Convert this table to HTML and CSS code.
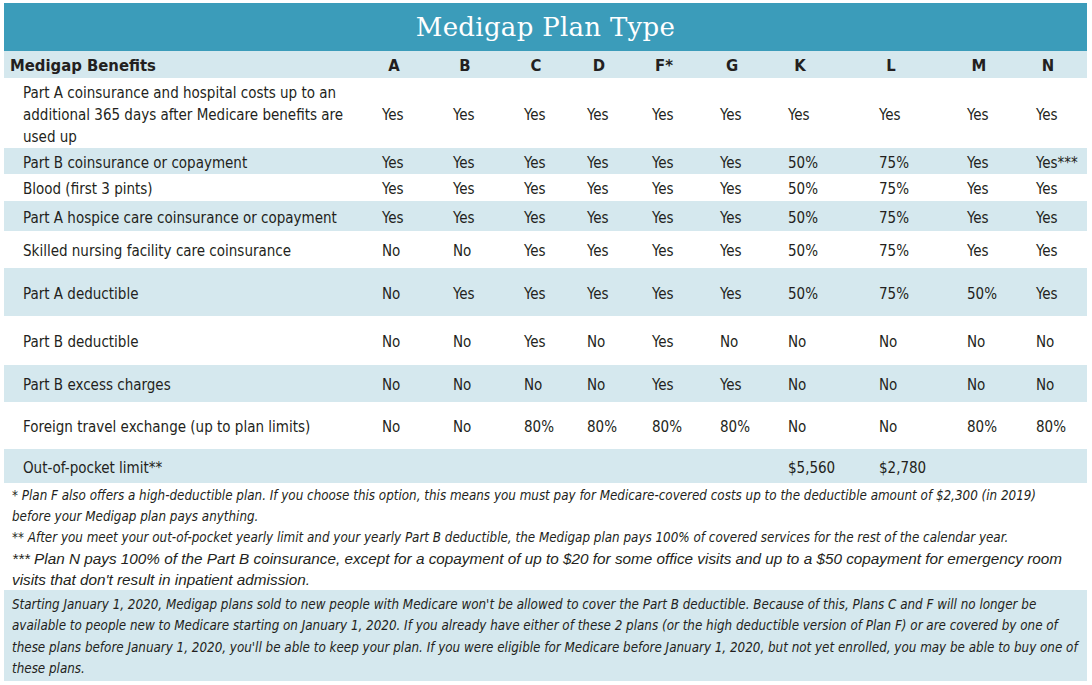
FILE: index.html
```html
<!DOCTYPE html>
<html lang="en">
<head>
<meta charset="utf-8">
<title>Medigap Plan Type</title>
<link rel="stylesheet" href="styles.css">
</head>
<body>
<div class="sheet">
  <div class="title">Medigap Plan Type</div>
  <div class="grid">
    <div class="row head">
      <div class="label">Medigap Benefits</div>
      <div class="c"><span class="hl">A</span></div>
      <div class="c"><span class="hl">B</span></div>
      <div class="c"><span class="hl">C</span></div>
      <div class="c"><span class="hl">D</span></div>
      <div class="c"><span class="hl">F*</span></div>
      <div class="c"><span class="hl">G</span></div>
      <div class="c"><span class="hl">K</span></div>
      <div class="c"><span class="hl">L</span></div>
      <div class="c"><span class="hl">M</span></div>
      <div class="c"><span class="hl">N</span></div>
    </div>
    <div class="row white r1">
      <div class="label multi">Part A coinsurance and hospital costs up to an additional 365 days after Medicare benefits are used up</div>
      <div class="c">Yes</div><div class="c">Yes</div><div class="c">Yes</div><div class="c">Yes</div><div class="c">Yes</div><div class="c">Yes</div><div class="c">Yes</div><div class="c">Yes</div><div class="c">Yes</div><div class="c">Yes</div>
    </div>
    <div class="row blue r2">
      <div class="label">Part B coinsurance or copayment</div>
      <div class="c">Yes</div><div class="c">Yes</div><div class="c">Yes</div><div class="c">Yes</div><div class="c">Yes</div><div class="c">Yes</div><div class="c">50%</div><div class="c">75%</div><div class="c">Yes</div><div class="c">Yes***</div>
    </div>
    <div class="row white r3">
      <div class="label">Blood (first 3 pints)</div>
      <div class="c">Yes</div><div class="c">Yes</div><div class="c">Yes</div><div class="c">Yes</div><div class="c">Yes</div><div class="c">Yes</div><div class="c">50%</div><div class="c">75%</div><div class="c">Yes</div><div class="c">Yes</div>
    </div>
    <div class="row blue r4">
      <div class="label">Part A hospice care coinsurance or copayment</div>
      <div class="c">Yes</div><div class="c">Yes</div><div class="c">Yes</div><div class="c">Yes</div><div class="c">Yes</div><div class="c">Yes</div><div class="c">50%</div><div class="c">75%</div><div class="c">Yes</div><div class="c">Yes</div>
    </div>
    <div class="row white r5">
      <div class="label">Skilled nursing facility care coinsurance</div>
      <div class="c">No</div><div class="c">No</div><div class="c">Yes</div><div class="c">Yes</div><div class="c">Yes</div><div class="c">Yes</div><div class="c">50%</div><div class="c">75%</div><div class="c">Yes</div><div class="c">Yes</div>
    </div>
    <div class="row blue r6">
      <div class="label">Part A deductible</div>
      <div class="c">No</div><div class="c">Yes</div><div class="c">Yes</div><div class="c">Yes</div><div class="c">Yes</div><div class="c">Yes</div><div class="c">50%</div><div class="c">75%</div><div class="c">50%</div><div class="c">Yes</div>
    </div>
    <div class="row white r7">
      <div class="label">Part B deductible</div>
      <div class="c">No</div><div class="c">No</div><div class="c">Yes</div><div class="c">No</div><div class="c">Yes</div><div class="c">No</div><div class="c">No</div><div class="c">No</div><div class="c">No</div><div class="c">No</div>
    </div>
    <div class="row blue r8">
      <div class="label">Part B excess charges</div>
      <div class="c">No</div><div class="c">No</div><div class="c">No</div><div class="c">No</div><div class="c">Yes</div><div class="c">Yes</div><div class="c">No</div><div class="c">No</div><div class="c">No</div><div class="c">No</div>
    </div>
    <div class="row white r9">
      <div class="label">Foreign travel exchange (up to plan limits)</div>
      <div class="c">No</div><div class="c">No</div><div class="c">80%</div><div class="c">80%</div><div class="c">80%</div><div class="c">80%</div><div class="c">No</div><div class="c">No</div><div class="c">80%</div><div class="c">80%</div>
    </div>
    <div class="row blue r10">
      <div class="label">Out-of-pocket limit**</div>
      <div class="c"></div><div class="c"></div><div class="c"></div><div class="c"></div><div class="c"></div><div class="c"></div><div class="c">$5,560</div><div class="c">$2,780</div><div class="c"></div><div class="c"></div>
    </div>
  </div>
  <div class="notes">
    <p>* Plan F also offers a high-deductible plan. If you choose this option, this means you must pay for Medicare-covered costs up to the deductible amount of $2,300 (in 2019) before your Medigap plan pays anything.</p>
    <p>** After you meet your out-of-pocket yearly limit and your yearly Part B deductible, the Medigap plan pays 100% of covered services for the rest of the calendar year.</p>
    <p class="wide">*** Plan N pays 100% of the Part B coinsurance, except for a copayment of up to $20 for some office visits and up to a $50 copayment for emergency room visits that don't result in inpatient admission.</p>
  </div>
  <div class="notice">
    <p>Starting January 1, 2020, Medigap plans sold to new people with Medicare won't be allowed to cover the Part B deductible. Because of this, Plans C and F will no longer be available to people new to Medicare starting on January 1, 2020. If you already have either of these 2 plans (or the high deductible version of Plan F) or are covered by one of these plans before January 1, 2020, you'll be able to keep your plan. If you were eligible for Medicare before January 1, 2020, but not yet enrolled, you may be able to buy one of these plans.</p>
  </div>
</div>
</body>
</html>
```

FILE: styles.css
```css
html, body {
  margin: 0;
  padding: 0;
  background: #ffffff;
}

body {
  font-family: "DejaVu Sans Condensed", "Liberation Sans Narrow", "Roboto Condensed", "Liberation Sans", sans-serif;
  color: #231f20;
}

.sheet {
  width: 1083px;
  margin: 3px 0 0 4px;
}

.title {
  height: 48px;
  background: #3b9cba;
  color: #ffffff;
  font-family: "DejaVu Serif", serif;
  font-size: 26px;
  line-height: 48px;
  text-align: center;
  letter-spacing: 0.3px;
}

.grid {
  display: flex;
  flex-direction: column;
}

.row {
  display: grid;
  grid-template-columns: 378px 71px 71px 63px 65px 68px 68px 91px 88px 69px 51px;
  align-items: center;
  box-sizing: border-box;
  padding-top: 3px;
  font-size: 15px;
}

.blue { background: #d5e8ee; }
.white { background: #ffffff; }

.label {
  padding-left: 19px;
}

.c {
  white-space: nowrap;
}

.head {
  height: 27px;
  padding-top: 1px;
  background: #d5e8ee;
  font-weight: bold;
  font-size: 16.5px;
}

.head .label {
  padding-left: 6px;
}

.hl {
  display: inline-block;
  width: 24px;
  text-align: center;
}

.multi {
  line-height: 22px;
  padding-right: 30px;
}

.r1 { height: 70px; }
.r2 { height: 26px; }
.r3 { height: 27px; }
.r4 { height: 30px; }
.r5 { height: 37px; }
.r6 { height: 48px; }
.r7 { height: 49px; }
.r8 { height: 37px; }
.r9 { height: 47px; }
.r10 { height: 34px; }

.notes {
  height: 107px;
  box-sizing: border-box;
  padding: 2px 37px 0 8px;
  font-style: italic;
  font-size: 13.3px;
}

.notes p {
  margin: 0;
  line-height: 21px;
}

.notes .wide {
  font-family: "Liberation Sans", Arial, sans-serif;
  font-size: 15.3px;
  margin-right: -34px;
}

.notice {
  background: #d5e8ee;
  box-sizing: border-box;
  height: 91px;
  padding: 4px 2px 0 8px;
  font-style: italic;
  font-size: 13.3px;
}

.notice p {
  margin: 0;
  line-height: 21.3px;
}
```
